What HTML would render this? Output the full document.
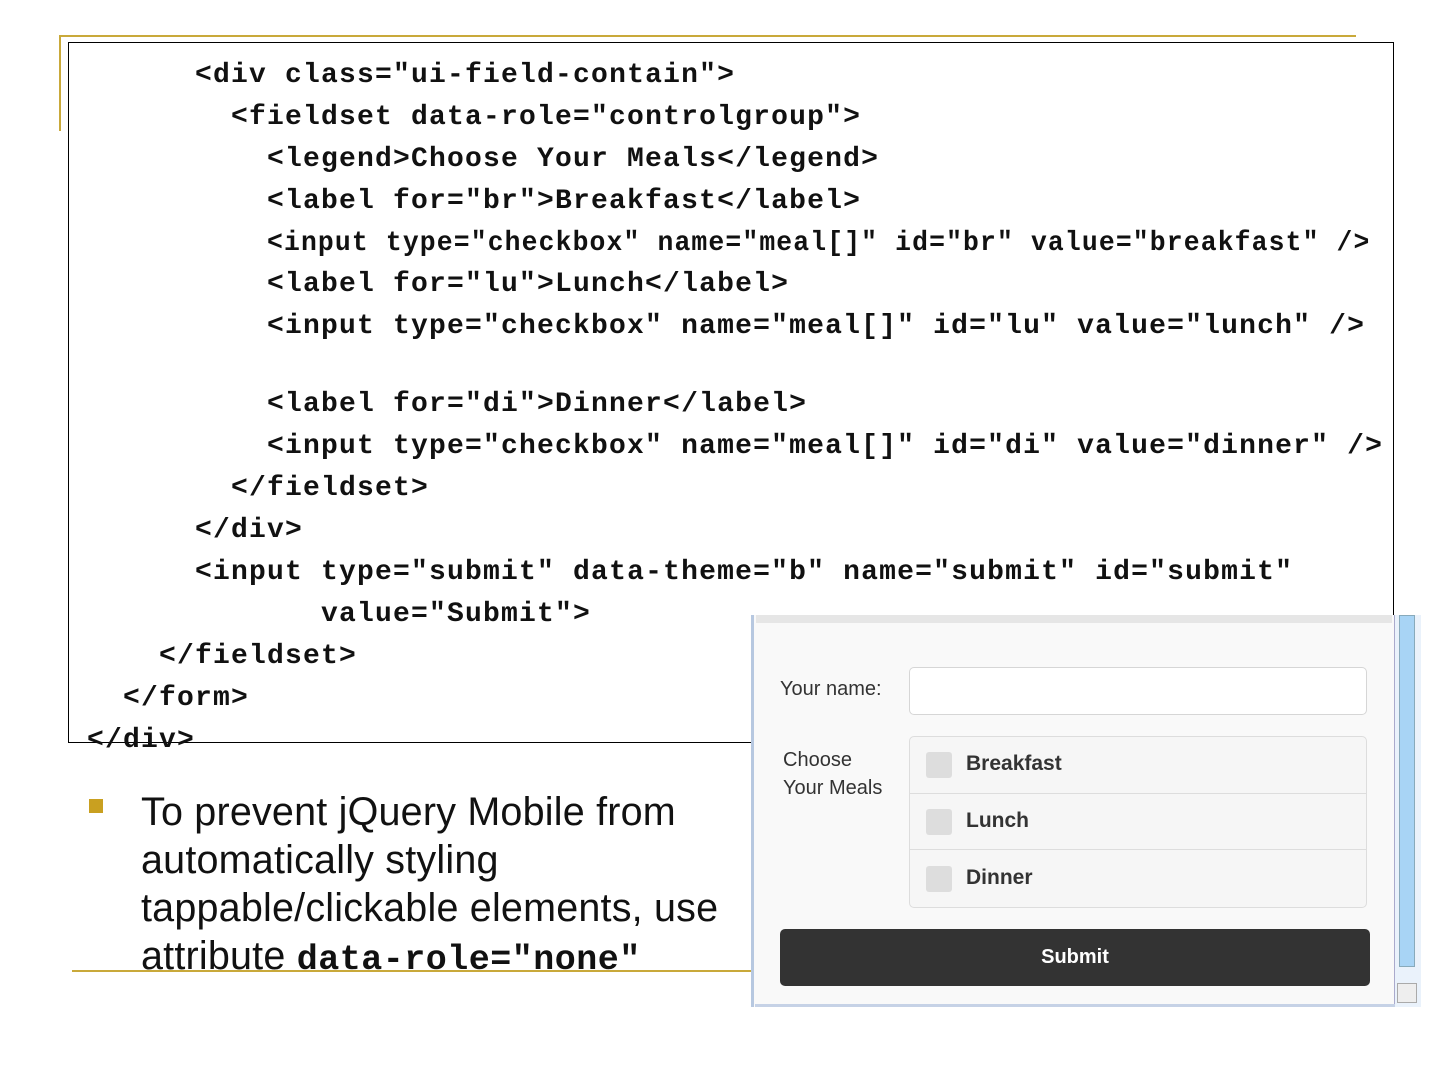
<!DOCTYPE html>
<html><head><meta charset="utf-8"><style>
body{margin:0;width:1440px;height:1080px;background:#fff;position:relative;overflow:hidden;font-family:"Liberation Sans",sans-serif}
.g{position:absolute;background:#c9a93a}
.box{position:absolute;left:68px;top:42px;width:1324px;height:699px;border:1px solid #000;background:#fff}
.c{position:absolute;font-family:"Liberation Mono",monospace;font-weight:bold;font-size:28px;letter-spacing:1.2px;white-space:pre;color:#111;line-height:30px;transform-origin:0 0}
.bt{position:absolute;left:141px;font-size:39.5px;color:#111;white-space:nowrap;line-height:48px;letter-spacing:0.2px}
.shot{position:absolute;left:751px;top:615px;width:670px;height:392px;background:#f9f9f9;border-left:3px solid #b7c8e0;box-sizing:border-box}
</style></head><body>
<div class="g" style="left:59px;top:35px;width:1297px;height:2px"></div>
<div class="g" style="left:59px;top:35px;width:2px;height:96px"></div>
<div class="box"></div>
<div class="c" style="left:195px;top:61px">&lt;div class="ui-field-contain"&gt;</div>
<div class="c" style="left:231px;top:103px">&lt;fieldset data-role="controlgroup"&gt;</div>
<div class="c" style="left:267px;top:145px">&lt;legend&gt;Choose Your Meals&lt;/legend&gt;</div>
<div class="c" style="left:267px;top:187px">&lt;label for="br"&gt;Breakfast&lt;/label&gt;</div>
<div class="c" style="left:267px;top:229px;transform:scaleX(0.943)">&lt;input type="checkbox" name="meal[]" id="br" value="breakfast" /&gt;</div>
<div class="c" style="left:267px;top:270px">&lt;label for="lu"&gt;Lunch&lt;/label&gt;</div>
<div class="c" style="left:267px;top:312px">&lt;input type="checkbox" name="meal[]" id="lu" value="lunch" /&gt;</div>
<div class="c" style="left:267px;top:390px">&lt;label for="di"&gt;Dinner&lt;/label&gt;</div>
<div class="c" style="left:267px;top:432px">&lt;input type="checkbox" name="meal[]" id="di" value="dinner" /&gt;</div>
<div class="c" style="left:231px;top:474px">&lt;/fieldset&gt;</div>
<div class="c" style="left:195px;top:516px">&lt;/div&gt;</div>
<div class="c" style="left:195px;top:558px">&lt;input type="submit" data-theme="b" name="submit" id="submit"</div>
<div class="c" style="left:321px;top:600px">value="Submit"&gt;</div>
<div class="c" style="left:159px;top:642px">&lt;/fieldset&gt;</div>
<div class="c" style="left:123px;top:684px">&lt;/form&gt;</div>
<div class="c" style="left:87px;top:726px">&lt;/div&gt;</div>

<div style="position:absolute;left:89px;top:799px;width:14px;height:14px;background:#c9a020"></div>
<div class="bt" style="top:788px">To prevent jQuery Mobile from</div>
<div class="bt" style="top:836px">automatically styling</div>
<div class="bt" style="top:884px">tappable/clickable elements, use</div>
<div class="bt" style="top:932px">attribute <b style="font-family:'Liberation Mono',monospace;font-size:35px;letter-spacing:0.5px">data-role="none"</b></div>
<div class="g" style="left:72px;top:970px;width:680px;height:2px"></div>

<div class="shot">
 <div style="position:absolute;left:2px;top:0;width:636px;height:8px;background:#e6e6e6"></div>
 <div style="position:absolute;right:0;top:0;width:26px;height:392px;background:#eaf2fb;border-left:1px solid #aac"></div>
 <div style="position:absolute;right:6px;top:0;width:14px;height:350px;background:#a8d4f5;border:1px solid #8ab"></div>
 <div style="position:absolute;right:4px;top:368px;width:18px;height:18px;background:#eee;border:1px solid #aaa"></div>
 <div style="position:absolute;left:1px;bottom:0;width:640px;height:3px;background:#c6d2e6"></div>
 <div style="position:absolute;left:26px;top:63px;font-size:20px;color:#333">Your name:</div>
 <div style="position:absolute;left:155px;top:52px;width:456px;height:46px;background:#fff;border:1px solid #d6d6d6;border-radius:5px"></div>
 <div style="position:absolute;left:29px;top:131px;font-size:20px;color:#333;line-height:28px">Choose<br>Your Meals</div>
 <div style="position:absolute;left:155px;top:121px;width:456px;height:170px;background:#f6f6f6;border:1px solid #ddd;border-radius:5px"></div>
 <div style="position:absolute;left:156px;top:178px;width:456px;height:1px;background:#ddd"></div>
 <div style="position:absolute;left:156px;top:234px;width:456px;height:1px;background:#ddd"></div>
 <div style="position:absolute;left:172px;top:137px;width:26px;height:26px;background:#ddd;border-radius:3px"></div>
 <div style="position:absolute;left:172px;top:194px;width:26px;height:26px;background:#ddd;border-radius:3px"></div>
 <div style="position:absolute;left:172px;top:251px;width:26px;height:26px;background:#ddd;border-radius:3px"></div>
 <div style="position:absolute;left:212px;top:137px;font-size:21px;font-weight:bold;color:#333">Breakfast</div>
 <div style="position:absolute;left:212px;top:194px;font-size:21px;font-weight:bold;color:#333">Lunch</div>
 <div style="position:absolute;left:212px;top:251px;font-size:21px;font-weight:bold;color:#333">Dinner</div>
 <div style="position:absolute;left:26px;top:314px;width:590px;height:57px;background:#333;border-radius:5px;color:#fff;font-weight:bold;font-size:20px;text-align:center;line-height:57px">Submit</div>
</div>
</body></html>
